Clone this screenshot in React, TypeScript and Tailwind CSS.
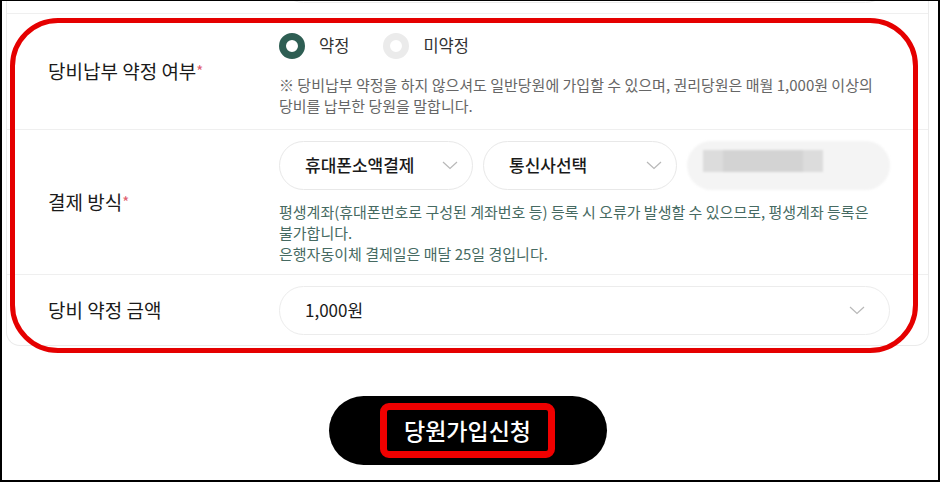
import React from 'react';

const FONT = { fontFamily: '"Noto Sans CJK KR", "Noto Sans", sans-serif' };

const Chevron: React.FC = () => (
  <svg width="16" height="9" viewBox="0 0 16 9" fill="none" stroke="#b8b8b8" strokeWidth={1.2}>
    <path d="M1 1l7 6.5L15 1" />
  </svg>
);

const Radio: React.FC<{ checked?: boolean; label: string }> = ({ checked, label }) => (
  <label className="flex items-center gap-[14px]">
    <span
      className={
        'w-[26px] h-[26px] rounded-full border-[7px] bg-white ' +
        (checked ? 'border-[#2e5e53]' : 'border-[#ebebeb]')
      }
    />
    <span className="text-[16.5px] text-[#333]">{label}</span>
  </label>
);

const Label: React.FC<{ text: string; required?: boolean }> = ({ text, required }) => (
  <div className="w-[272px] shrink-0 pl-[41px] text-[19px] text-[#1a1a1a]">
    {text}
    {required && <span className="relative top-[-2px] text-[#e0606f] text-[15px]">*</span>}
  </div>
);

export default function App() {
  return (
    <div style={FONT} className="w-[940px] h-[482px] bg-white border-2 border-t border-black overflow-hidden">
      <div className="relative">
        {/* form card */}
        <div className="ml-[4px] w-[923px] bg-white border-x border-b border-[#ebebeb] rounded-b-[14px]">
          {/* tail of previous row */}
          <div className="h-[13px] overflow-hidden flex items-end pb-[10px] pl-[272px] pr-[38px] border-b border-[#efefef]">
            <div className="h-[49px] w-full shrink-0 rounded-full border border-[#ececec]" />
          </div>

          {/* 당비납부 약정 여부 */}
          <div className="flex items-center h-[116px] border-b border-[#efefef]">
            <Label text="당비납부 약정 여부" required />
            <div className="flex-1 pr-[38px] pb-[4px]">
              <div className="flex items-center gap-[34px] h-[45px]">
                <Radio checked label="약정" />
                <Radio label="미약정" />
              </div>
              <p className="mt-[6px] text-[15px] leading-[21px] text-[#666] whitespace-nowrap">
                ※ 당비납부 약정을 하지 않으셔도 일반당원에 가입할 수 있으며, 권리당원은 매월 1,000원 이상의
                <br />
                당비를 납부한 당원을 말합니다.
              </p>
            </div>
          </div>

          {/* 결제 방식 */}
          <div className="flex items-center h-[145px] border-b border-[#efefef]">
            <Label text="결제 방식" required />
            <div className="flex-1 pr-[38px]">
              <div className="flex gap-[10px] h-[49px]">
                <div className="w-[194px] rounded-full border border-[#e8e8e8] flex items-center justify-between pl-[25px] pr-[14px]">
                  <span className="text-[17px] font-medium text-[#1a1a1a]">휴대폰소액결제</span>
                  <Chevron />
                </div>
                <div className="w-[194px] rounded-full border border-[#e8e8e8] flex items-center justify-between pl-[25px] pr-[14px]">
                  <span className="text-[17px] font-medium text-[#1a1a1a]">통신사선택</span>
                  <Chevron />
                </div>
                <div className="flex-1 rounded-full bg-[#f4f4f4] blur-[1px] flex items-start pt-[9px] pl-[16px]">
                  <div className="w-[120px] h-[22px] bg-[#dcdcdc] flex">
                    <div className="ml-[20px] w-[80px] h-full bg-[#d3d3d3]" />
                  </div>
                </div>
              </div>
              <div className="mt-[11px] text-[15px] leading-[21px] text-[#466a62] whitespace-nowrap">
                <p>
                  평생계좌(휴대폰번호로 구성된 계좌번호 등) 등록 시 오류가 발생할 수 있으므로, 평생계좌 등록은
                  <br />
                  불가합니다.
                </p>
                <p>은행자동이체 결제일은 매달 25일 경입니다.</p>
              </div>
            </div>
          </div>

          {/* 당비 약정 금액 */}
          <div className="flex items-center h-[70px]">
            <Label text="당비 약정 금액" />
            <div className="flex-1 pr-[38px]">
              <div className="h-[49px] rounded-full border border-[#ececec] flex items-center justify-between pl-[25px] pr-[24px]">
                <span className="text-[17px] text-[#1a1a1a]">1,000원</span>
                <Chevron />
              </div>
            </div>
          </div>
        </div>

        {/* red annotation around the form */}
        <div className="absolute left-[8px] top-[17px] w-[908px] h-[335px] rounded-[48px] border-[5px] border-[#e50000] pointer-events-none" />
      </div>

      <div className="ml-[4px] w-[923px] flex justify-center mt-[50px]">
        <button className="w-[278px] h-[69px] rounded-full bg-black flex items-center justify-center">
          <span className="inline-flex items-center h-[55px] px-[17px] border-[7px] border-[#f00000] rounded-[9px] text-[23px] font-medium text-white">
            당원가입신청
          </span>
        </button>
      </div>
    </div>
  );
}
